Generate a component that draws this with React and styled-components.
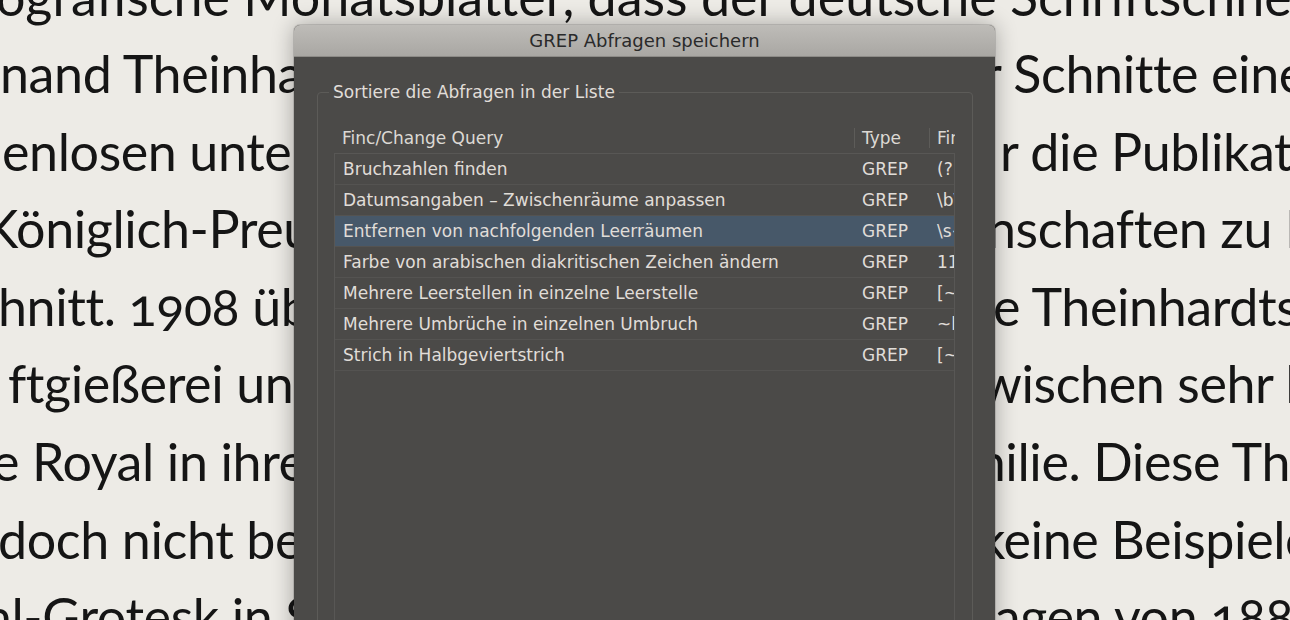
import React from 'react'
import styled, { createGlobalStyle } from 'styled-components'

const GlobalStyle = createGlobalStyle`
  html, body {
    margin: 0;
    padding: 0;
    background: #edebe6;
    overflow: hidden;
  }
`

const Page = styled.div`
  position: relative;
  width: 1290px;
  height: 620px;
  overflow: hidden;
  background: #edebe6;
`

const TextBlock = styled.div`
  margin-top: -42.5px;
  display: grid;
  grid-template-columns: 294px 701px minmax(0, 1fr);
  font-family: Lato, "Open Sans", sans-serif;
  font-size: 52px;
  line-height: 77.6px;
  letter-spacing: -0.4px;
  font-variant-numeric: oldstyle-nums;
  color: #151515;
`

const FullLine = styled.div`
  grid-column: 1 / -1;
  white-space: nowrap;
  letter-spacing: 0;
  text-indent: ${p => p.$shift}px;
`

const LeftPart = styled.div`
  grid-column: 1;
  white-space: nowrap;
  overflow: hidden;
  text-indent: ${p => p.$shift}px;
`

const RightPart = styled.div`
  grid-column: 3;
  white-space: nowrap;
  overflow: hidden;
  text-indent: ${p => p.$shift}px;
`

const Dialog = styled.div`
  position: absolute;
  left: 294px;
  top: 25px;
  width: 701px;
  height: 720px;
  display: flex;
  flex-direction: column;
  background: #4b4a48;
  border-radius: 6px 6px 0 0;
  box-shadow: 0 0 22px rgba(0, 0, 0, 0.32), 0 0 0 1px rgba(0, 0, 0, 0.12);
  font-family: "DejaVu Sans", Verdana, sans-serif;
  color: #e0ddd8;
`

const TitleBar = styled.div`
  flex: none;
  height: 32px;
  box-sizing: border-box;
  display: flex;
  align-items: center;
  justify-content: center;
  background: linear-gradient(#bebcb8, #a9a7a3);
  border-bottom: 1px solid #8d8b87;
  border-radius: 6px 6px 0 0;
  font-size: 18px;
  color: #2a2a2a;
`

const Group = styled.fieldset`
  flex: 1;
  min-width: 0;
  width: 656px;
  box-sizing: border-box;
  margin: 25px 0 0 23px;
  padding: 0 17px 0 11px;
  border: 1px solid #5c5b58;
  border-radius: 4px;
`

const Legend = styled.legend`
  padding: 0 4px;
  font-size: 17px;
  line-height: 20px;
  color: #e0ddd8;
`

const Table = styled.div`
  margin: 21px 0 0 5px;
  width: 621px;
  font-size: 17px;
`

const HeaderRow = styled.div`
  height: 30px;
  display: grid;
  grid-template-columns: 520px 75px minmax(0, 1fr);
  align-items: center;
`

const HeaderCell = styled.div`
  height: 20px;
  line-height: 20px;
  padding-left: ${p => (p.$sep ? 7 : 8)}px;
  border-left: ${p => (p.$sep ? '1px solid #5d5c59' : 'none')};
  white-space: nowrap;
  overflow: hidden;
  color: #dcd9d4;
`

const Body = styled.div`
  min-height: 520px;
  border: 1px solid #585755;
  border-bottom: none;
  overflow: hidden;
`

const Row = styled.div`
  height: 30px;
  display: grid;
  grid-template-columns: 519px 75px minmax(0, 1fr);
  align-items: center;
  background: ${p => (p.$selected ? '#475869' : 'transparent')};
  border-bottom: 1px solid #545351;
`

const Cell = styled.div`
  padding-left: 8px;
  white-space: nowrap;
  overflow: hidden;
`

const lines = [
  { left: 'nand Theinhardt', ls: 0, right: 'r Schnitte einer', rs: -12 },
  { left: 'enlosen unter', ls: 2, right: 'r die Publikationen', rs: 5 },
  { left: 'Königlich-Preußischen', ls: -16, right: 'nschaften zu Berlin', rs: -8 },
  { left: 'hnitt. 1908 übernahm', ls: -2, right: 'e Theinhardtsche', rs: -2 },
  { left: 'ftgießerei und', ls: 8, right: 'wischen sehr beliebte', rs: -14 },
  { left: 'e Royal in ihre', ls: -8, right: 'milie. Diese Theinhardt', rs: -32 },
  { left: 'doch nicht bekannt', ls: -2, right: 'keine Beispiele', rs: -16 },
  { left: 'al-Grotesk in Schriftmustern', ls: -14, right: 'lagen von 1889', rs: -12 },
]

const queries = [
  ['Bruchzahlen finden', '(?<=\\d)'],
  ['Datumsangaben – Zwischenräume anpassen', '\\b\\d'],
  ['Entfernen von nachfolgenden Leerräumen', '\\s+$'],
  ['Farbe von arabischen diakritischen Zeichen ändern', '1111'],
  ['Mehrere Leerstellen in einzelne Leerstelle', '[~m~>'],
  ['Mehrere Umbrüche in einzelnen Umbruch', '~b~b+'],
  ['Strich in Halbgeviertstrich', '[~='],
]

export default function App () {
  return (
    <Page>
      <GlobalStyle />
      <TextBlock>
        <FullLine $shift={-4}>ografische Monatsblätter, dass der deutsche Schriftschneider</FullLine>
        {lines.map((line, i) => (
          <React.Fragment key={i}>
            <LeftPart $shift={line.ls}>{line.left}</LeftPart>
            <RightPart $shift={line.rs}>{line.right}</RightPart>
          </React.Fragment>
        ))}
      </TextBlock>

      <Dialog>
        <TitleBar>GREP Abfragen speichern</TitleBar>
        <Group>
          <Legend>Sortiere die Abfragen in der Liste</Legend>
          <Table>
            <HeaderRow>
              <HeaderCell>Finc/Change Query</HeaderCell>
              <HeaderCell $sep>Type</HeaderCell>
              <HeaderCell $sep>Find</HeaderCell>
            </HeaderRow>
            <Body>
              {queries.map(([name, find], i) => (
                <Row key={name} $selected={i === 2}>
                  <Cell>{name}</Cell>
                  <Cell>GREP</Cell>
                  <Cell>{find}</Cell>
                </Row>
              ))}
            </Body>
          </Table>
        </Group>
      </Dialog>
    </Page>
  )
}
